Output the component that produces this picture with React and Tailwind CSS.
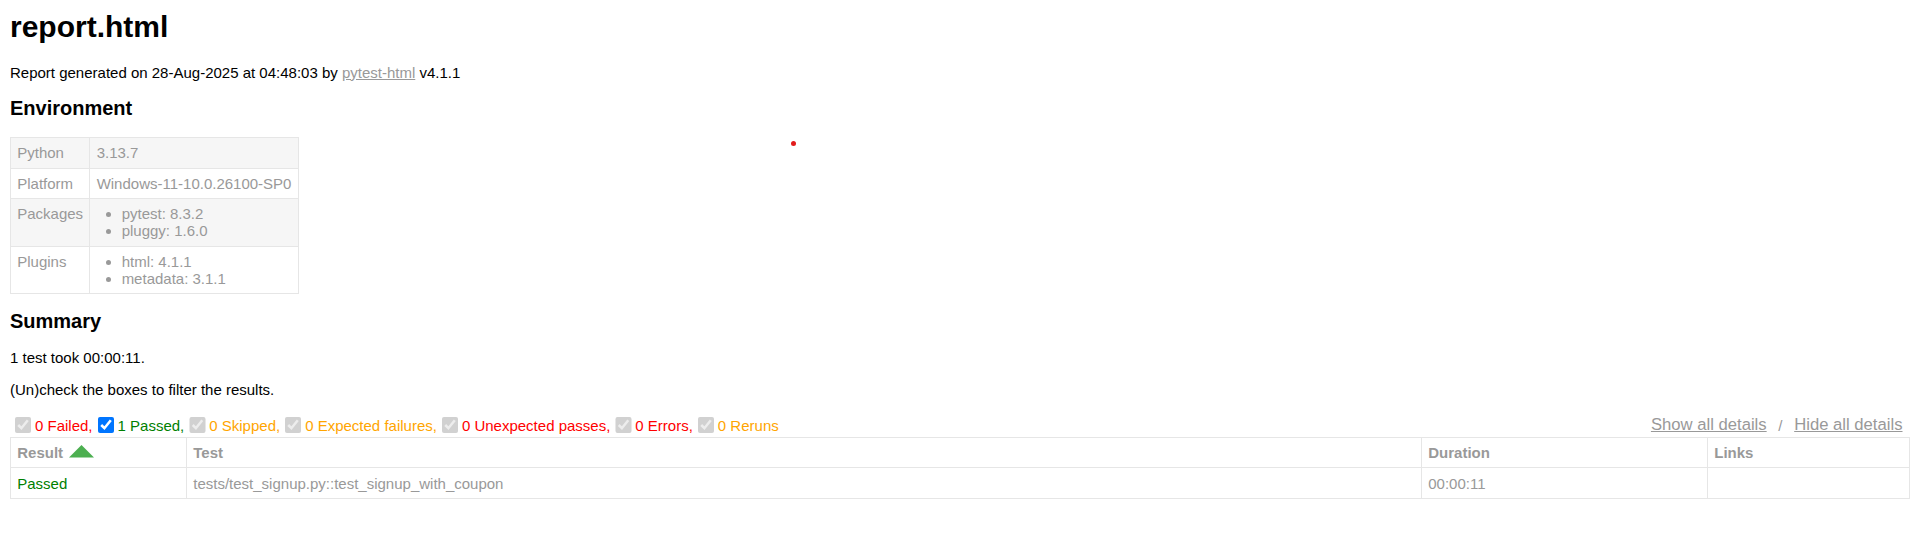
import React from 'react';

/**
 * pytest-html report page (rendered at 125% scale)
 */

const environment = [
  { key: 'Python', value: '3.13.7' },
  { key: 'Platform', value: 'Windows-11-10.0.26100-SP0' },
  { key: 'Packages', list: ['pytest: 8.3.2', 'pluggy: 1.6.0'] },
  { key: 'Plugins', list: ['html: 4.1.1', 'metadata: 3.1.1'] },
];

const filters = [
  { label: '0 Failed,', color: 'text-[#ff0000]', enabled: false },
  { label: '1 Passed,', color: 'text-[#008000]', enabled: true },
  { label: '0 Skipped,', color: 'text-[#ffa500]', enabled: false },
  { label: '0 Expected failures,', color: 'text-[#ffa500]', enabled: false },
  { label: '0 Unexpected passes,', color: 'text-[#ff0000]', enabled: false },
  { label: '0 Errors,', color: 'text-[#ff0000]', enabled: false },
  { label: '0 Reruns', color: 'text-[#ffa500]', enabled: false },
];

const cell = 'border border-[#e6e6e6] px-[6.25px] py-[6.25px] text-left align-top';

export default function App() {
  return (
    <div className="relative min-h-[549px] bg-white px-[10px] pt-[10px] pb-[10px] font-['Liberation_Sans',Arial,Helvetica,sans-serif] text-[15px] leading-[normal] text-[#999]">
      {/* punto rojo suelto de la captura */}
      <span className="absolute left-[791px] top-[141px] h-[5px] w-[5px] rounded-full bg-[#e21b1b]" />

      <h1 className="text-[30px] font-bold text-black">report.html</h1>
      <p className="mt-[19.5px] text-black">
        Report generated on 28-Aug-2025 at 04:48:03 by{' '}
        <a href="#" className="text-[#999] underline">pytest-html</a> v4.1.1
      </p>

      {/* Environment */}
      <h2 className="mt-[16px] mb-[17.5px] text-[20px] font-bold text-black">Environment</h2>
      <table className="border-collapse">
        <tbody>
          {environment.map((row, i) => (
            <tr key={row.key} className={i % 2 === 0 ? 'bg-[#f6f6f6]' : ''}>
              <td className={cell}>{row.key}</td>
              <td className={cell}>
                {row.list ? (
                  <ul className="list-disc px-[25px]">
                    {row.list.map((item) => (
                      <li key={item}>{item}</li>
                    ))}
                  </ul>
                ) : (
                  row.value
                )}
              </td>
            </tr>
          ))}
        </tbody>
      </table>

      {/* Summary */}
      <h2 className="mt-[15.6px] text-[20px] font-bold text-black">Summary</h2>
      <p className="mt-[16.6px] text-black">1 test took 00:00:11.</p>
      <p className="mt-[15px] text-black">(Un)check the boxes to filter the results.</p>

      <div className="mt-[15px] flex justify-between">
        <div className="flex items-center">
          {filters.map((f) => (
            <React.Fragment key={f.label}>
              <input
                type="checkbox"
                checked
                readOnly
                disabled={!f.enabled}
                className="mt-[3.75px] mb-[3.75px] mr-[3.75px] ml-[5px] h-[16.25px] w-[16.25px]"
              />
              <span className={f.color}>{f.label}</span>
            </React.Fragment>
          ))}
        </div>
        <div className="flex items-center">
          <button className="px-[7.5px] text-[16.67px] text-[#999] underline">Show all details</button>
          <span>&nbsp;/&nbsp;</span>
          <button className="px-[7.5px] text-[16.67px] text-[#999] underline">Hide all details</button>
        </div>
      </div>

      {/* Results */}
      <table className="w-full table-fixed border-collapse border border-[#e6e6e6]">
        <colgroup>
          <col className="w-[176px]" />
          <col />
          <col className="w-[286px]" />
          <col className="w-[202px]" />
        </colgroup>
        <thead>
          <tr>
            <th className={`${cell} font-bold`}>
              <span className="inline-flex items-end">
                Result
                <svg width="25" height="13" viewBox="0 0 25 13" className="ml-[6px] mb-[3px]">
                  <polygon points="12.5,0 25,12.5 0,12.5" fill="#4caf50" />
                </svg>
              </span>
            </th>
            <th className={`${cell} font-bold`}>Test</th>
            <th className={`${cell} font-bold`}>Duration</th>
            <th className={`${cell} font-bold`}>Links</th>
          </tr>
        </thead>
        <tbody>
          <tr>
            <td className={`${cell} text-[#008000]`}>Passed</td>
            <td className={cell}>tests/test_signup.py::test_signup_with_coupon</td>
            <td className={cell}>00:00:11</td>
            <td className={cell}></td>
          </tr>
        </tbody>
      </table>
    </div>
  );
}
